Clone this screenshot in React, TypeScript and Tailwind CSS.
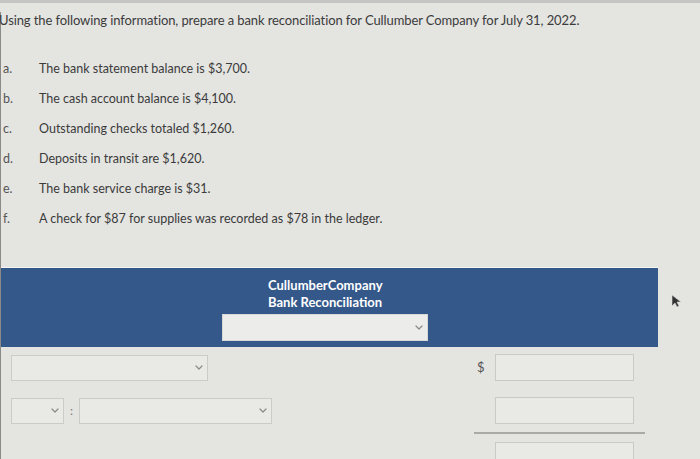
import React from 'react'

const items = [
    ['a.', 'The bank statement balance is $3,700.'],
    ['b.', 'The cash account balance is $4,100.'],
    ['c.', 'Outstanding checks totaled $1,260.'],
    ['d.', 'Deposits in transit are $1,620.'],
    ['e.', 'The bank service charge is $31.'],
    ['f.', 'A check for $87 for supplies was recorded as $78 in the ledger.'],
]

function Chevron() {
    return (
        <svg width="8" height="5" viewBox="0 0 8 5" fill="none" stroke="#8a8a88" strokeWidth="1.2" strokeLinecap="round" strokeLinejoin="round">
            <path d="M1 1l3 3 3-3" />
        </svg>
    )
}

function SelectBox({ className }: { className: string }) {
    return (
        <div className={`flex items-center justify-end pr-[4px] border border-[#cbcbc8] bg-[#e9e9e6] ${className}`}>
            <Chevron />
        </div>
    )
}

function InputBox({ className = '' }: { className?: string }) {
    return <div className={`w-[139px] h-[27px] border border-[#c9c9c6] bg-[#e9e9e6] ${className}`} />
}

export default function App() {
    return (
        <div className="relative w-[700px] h-[459px] overflow-hidden bg-[#e4e4e1] text-[#3b3b3b]" style={{ fontFamily: 'Lato, "Open Sans", sans-serif' }}>
            <div className="h-[3px] bg-[#c5c5c3]" />
            <div className="border-l border-[#8a8a88] h-[456px]">
                <p className="mt-[9px] -ml-[2px] text-[13px] leading-[16px] tracking-[-0.1px]">
                    Using the following information, prepare a bank reconciliation for Cullumber Company for July 31, 2022.
                </p>

                <div className="mt-[33px] flex flex-col gap-[14px]">
                    {items.map(([label, text]) => (
                        <div key={label} className="flex text-[12.5px] leading-[16px]">
                            <span className="w-[38px] pl-[2px] text-[#555]">{label}</span>
                            <span>{text}</span>
                        </div>
                    ))}
                </div>

                <div className="mt-[40px] w-[657px] border-t border-[#f4f4f2]">
                    <div className="h-[79px] bg-[#34588a] flex flex-col pt-[9px]">
                        <div className="ml-[267px] text-white font-bold text-[13px] leading-[17px]">
                            <div>CullumberCompany</div>
                            <div>Bank Reconciliation</div>
                        </div>
                        <SelectBox className="ml-[221px] mt-[3px] w-[206px] h-[27px] bg-[#ececea] border-[#d8d8d6]" />
                    </div>
                </div>

                <div className="mt-[7px] flex items-center">
                    <div className="w-[473px] pl-[10px]">
                        <SelectBox className="w-[197px] h-[26px]" />
                    </div>
                    <span className="w-[21px] pl-[3px] text-[13px] text-[#555]">$</span>
                    <InputBox />
                </div>

                <div className="mt-[16px] flex items-center">
                    <div className="w-[473px] pl-[10px] flex items-center">
                        <SelectBox className="w-[53px] h-[26px]" />
                        <span className="w-[15px] text-center text-[12px] text-[#777]">:</span>
                        <SelectBox className="w-[193px] h-[26px]" />
                    </div>
                    <InputBox className="ml-[21px]" />
                </div>

                <div className="mt-[8px] ml-[473px] w-[171px] h-[2px] bg-[#a9a9a6]" />
                <InputBox className="mt-[8px] ml-[494px]" />
            </div>

            <svg className="absolute left-[671px] top-[294px]" width="10" height="14" viewBox="0 0 10 14">
                <path d="M1 1v11l3-3 2 4 2-1-2-4h4z" fill="#333" stroke="#ddd" strokeWidth="0.6" />
            </svg>
        </div>
    )
}
